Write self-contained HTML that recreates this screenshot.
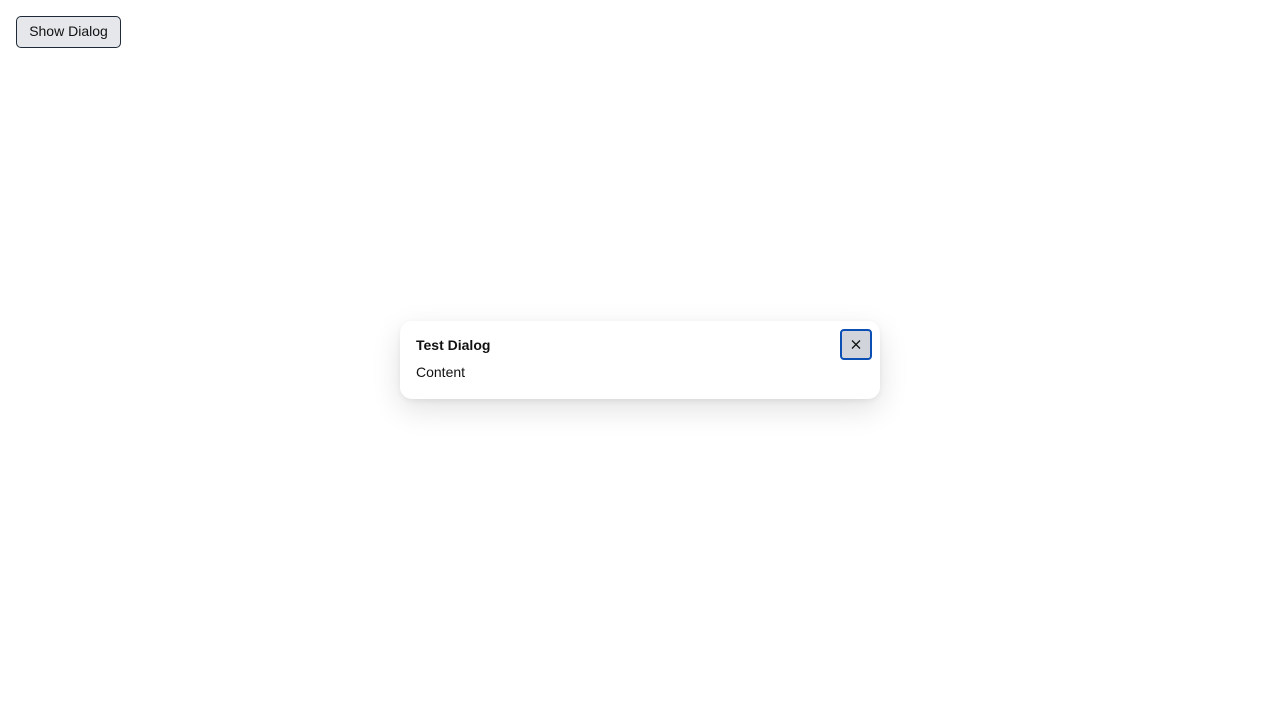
<!DOCTYPE html>
<html><head><style>
body{margin:0;width:1280px;height:720px;background:#fff;font-family:"Liberation Sans",sans-serif;position:relative;overflow:hidden}
.btn{position:absolute;left:16px;top:16px;width:105px;height:32px;box-sizing:border-box;border:1px solid #1f2937;border-radius:5px;background:#e5e7eb;font-size:14px;color:#111;line-height:29px;text-align:center}
.dlg{position:absolute;left:400px;top:321px;width:480px;height:78px;background:#fff;border-radius:12px;box-shadow:0 10px 30px rgba(0,0,0,0.12),0 2px 6px rgba(0,0,0,0.06)}
.t{position:absolute;left:16px;top:16px;font-size:14px;font-weight:bold;color:#111}
.c{position:absolute;left:16px;top:43px;font-size:14px;color:#111}
.x{position:absolute;left:440px;top:8px;width:32px;height:31px;box-sizing:border-box;border:2px solid #0b4fb5;border-radius:4px;background:#d1d5db}
</style></head><body>
<div class="btn">Show Dialog</div>
<div class="dlg"><div class="t">Test Dialog</div><div class="c">Content</div>
<div class="x"><svg width="28" height="27" viewBox="0 0 28 27"><path d="M10 9.5l8 8M18 9.5l-8 8" stroke="#111" stroke-width="1.3"/></svg></div></div>
</body></html>
